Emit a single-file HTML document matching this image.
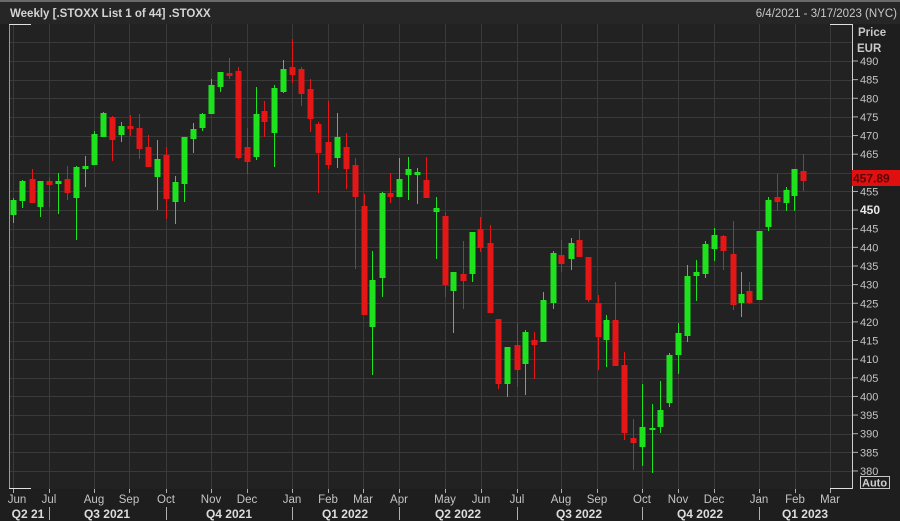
<!DOCTYPE html>
<html><head><meta charset="utf-8"><style>
html,body{margin:0;padding:0;background:#1e1e1e;width:900px;height:521px;overflow:hidden}
svg{display:block}
text{font-family:"Liberation Sans","DejaVu Sans",sans-serif}
</style></head><body>
<svg id="s" width="900" height="521" xmlns="http://www.w3.org/2000/svg">
<rect x="0" y="0" width="900" height="521" fill="#1e1e1e"/>
<rect x="0" y="0" width="900" height="2" fill="#6a6a6a"/>
<rect x="0" y="2" width="900" height="22" fill="#262626"/>
<text x="10" y="17" font-size="11.5" font-weight="bold" fill="#d4d4d4">Weekly [.STOXX List 1 of 44] .STOXX</text>
<text x="897" y="17" font-size="11.5" fill="#c8c8c8" text-anchor="end">6/4/2021 - 3/17/2023 (NYC)</text>
<rect x="9" y="24" width="843" height="465" fill="#222222"/>
<g id="grid" stroke="#3a3a3a" stroke-width="1"></g>
<g id="c"></g>
<line x1="9.5" y1="24" x2="9.5" y2="489" stroke="#9a9a9a"/>
<line x1="9" y1="24.5" x2="31" y2="24.5" stroke="#e0e0e0"/>
<line x1="9" y1="488.5" x2="31" y2="488.5" stroke="#e0e0e0"/>
<line x1="830" y1="24.5" x2="853" y2="24.5" stroke="#e0e0e0"/>
<line x1="830" y1="488.5" x2="853" y2="488.5" stroke="#e0e0e0"/>
<line x1="852.5" y1="24" x2="852.5" y2="489" stroke="#d0d0d0"/>
<text x="858" y="36" font-size="11.5" font-weight="bold" fill="#c8c8c8">Price</text>
<text x="857" y="52" font-size="11.5" font-weight="bold" fill="#c8c8c8">EUR</text>
<g id="ax" font-size="11" fill="#c4c4c4"></g>
<rect x="852" y="170" width="48" height="16" fill="#e01010"/>
<text x="853" y="182.5" font-size="12" font-weight="bold" fill="#5a0606">457.89</text>
<rect x="860.5" y="476.5" width="29" height="12" fill="none" stroke="#c8c8c8"/>
<text x="862" y="486.5" font-size="11" font-weight="bold" fill="#d0d0d0">Auto</text>
<g id="bx" font-size="11.5" fill="#c4c4c4" text-anchor="middle">
<text x="17" y="503">Jun</text><text x="49" y="503">Jul</text><text x="94" y="503">Aug</text><text x="129" y="503">Sep</text><text x="166" y="503">Oct</text><text x="211" y="503">Nov</text><text x="247" y="503">Dec</text><text x="292" y="503">Jan</text><text x="328" y="503">Feb</text><text x="363" y="503">Mar</text><text x="399" y="503">Apr</text><text x="445" y="503">May</text><text x="481" y="503">Jun</text><text x="517" y="503">Jul</text><text x="561" y="503">Aug</text><text x="597" y="503">Sep</text><text x="642" y="503">Oct</text><text x="678" y="503">Nov</text><text x="714" y="503">Dec</text><text x="759" y="503">Jan</text><text x="795" y="503">Feb</text><text x="830" y="503">Mar</text>
</g>
<g font-size="12" font-weight="bold" fill="#dcdcdc" text-anchor="middle">
<text x="28" y="518">Q2 21</text><text x="107" y="518">Q3 2021</text><text x="229" y="518">Q4 2021</text><text x="345" y="518">Q1 2022</text><text x="458" y="518">Q2 2022</text><text x="579" y="518">Q3 2022</text><text x="700" y="518">Q4 2022</text><text x="805" y="518">Q1 2023</text>
</g>
<g id="tk" stroke="#b0b0b0"></g>
</svg>
<script>
var ns="http://www.w3.org/2000/svg";
function el(t,a,p){var e=document.createElementNS(ns,t);for(var k in a)e.setAttribute(k,a[k]);document.getElementById(p).appendChild(e);return e;}
function Y(p){return 61+(490-p)*3.727;}
var mx=[13,49,94,129,166,211,247,292,328,363,399,445,481,517,561,597,642,678,714,759,795,830];
mx.forEach(function(x){el("line",{x1:x+.5,y1:24,x2:x+.5,y2:489},"grid");el("line",{x1:x+.5,y1:489,x2:x+.5,y2:493},"tk");});
[49,166,292,399,517,642,759].forEach(function(x){el("line",{x1:x+.5,y1:507,x2:x+.5,y2:520},"tk");});
for(var p=380;p<=495;p+=5){var y=Math.round(Y(p))+.5;el("line",{x1:9,y1:y,x2:852,y2:y},"grid");}
for(var p=380;p<=490;p+=5){var y=Y(p);el("line",{x1:853,y1:y,x2:858,y2:y,stroke:"#b0b0b0"},"ax");
 if(p==460)continue;var t=el("text",{x:860,y:y+4},"ax");t.textContent=p;if(p==450){t.setAttribute("font-weight","bold");t.setAttribute("fill","#e8e8e8");t.setAttribute("font-size","12");}}
var G="#1fe21f",R="#e41616";
var d=[
[13,198,223,200,215,G],[22,180,208,181,201,G],[32,169,203,179,203,R],[40,181,217,181,207,G],[49,178,207,181,185,R],[58,173,214,181,184,G],[67,166,200,179,193,R],[76,166,240,167,198,G],[85,156,187,166,169,G],[94,131,165,134,165,G],[103,112,137,113,137,G],[112,116,161,117,140,R],[121,122,142,126,135,G],[130,115,136,126,129,R],[139,114,159,128,149,R],[148,135,167,147,167,R],[157,140,210,159,177,G],[166,147,219,155,199,R],[175,176,224,182,202,G],[184,137,202,137,184,G],[193,123,153,129,139,G],[202,113,131,114,128,G],[211,79,114,85,114,G],[220,72,92,72,87,G],
[229,58,79,73,76,R],[238,67,159,71,158,R],[247,128,174,147,162,R],[256,87,160,114,157,G],[264,101,137,111,122,R],[274,85,167,88,133,G],[283,60,93,69,92,G],[292,39,83,67,75,R],[301,67,106,69,94,R],[310,79,132,89,119,R],[318,122,193,124,153,R],[328,101,169,142,165,R],[337,113,168,137,158,G],[346,133,189,147,169,R],[355,158,269,165,197,R],[364,194,315,206,315,R],[372,251,375,280,327,G],[382,192,297,193,278,G],[390,173,203,193,197,R],[399,158,197,179,197,G],[408,157,200,169,175,G],[417,168,204,172,175,G],[426,157,198,180,198,R],
[436,197,259,208,212,G],[445,212,297,216,285,R],[453,272,333,272,291,G],[463,241,309,274,281,R],[472,232,282,232,274,G],[480,217,252,229,248,R],[490,225,313,243,313,R],[498,319,389,319,384,R],[507,347,397,347,384,G],[517,323,387,345,370,R],[525,330,395,332,364,G],[534,332,379,340,345,R],[543,292,342,300,342,G],[553,251,309,253,303,G],[561,240,272,255,264,R],[571,238,270,243,259,G],[579,230,257,240,257,R],[588,257,302,257,300,R],[598,295,370,303,337,R],[606,315,367,320,340,G],[615,282,366,320,366,R],[624,352,440,365,433,R],[633,419,470,438,443,R],
[642,384,466,427,447,G],[652,404,473,428,430,G],[660,381,433,410,427,G],[669,353,407,355,403,G],[678,323,374,333,355,G],[687,265,342,276,336,G],[696,260,301,272,276,G],[705,241,278,244,274,G],[714,228,261,235,249,G],[723,235,270,236,251,R],[733,221,310,254,305,R],[741,272,317,294,303,G],[749,282,304,291,303,R],[759,231,300,231,300,G],[768,197,231,200,227,G],[777,174,211,197,202,R],[786,187,211,190,203,G],[794,169,211,169,196,G],[803,154,191,171,181,R]];
d.forEach(function(c){el("line",{x1:c[0]+.5,y1:c[1],x2:c[0]+.5,y2:c[2],stroke:c[5],"stroke-width":1},"c");
el("rect",{x:c[0]-2.5,y:c[3],width:6,height:Math.max(2,c[4]-c[3]),fill:c[5]},"c");});
</script>
</body></html>
